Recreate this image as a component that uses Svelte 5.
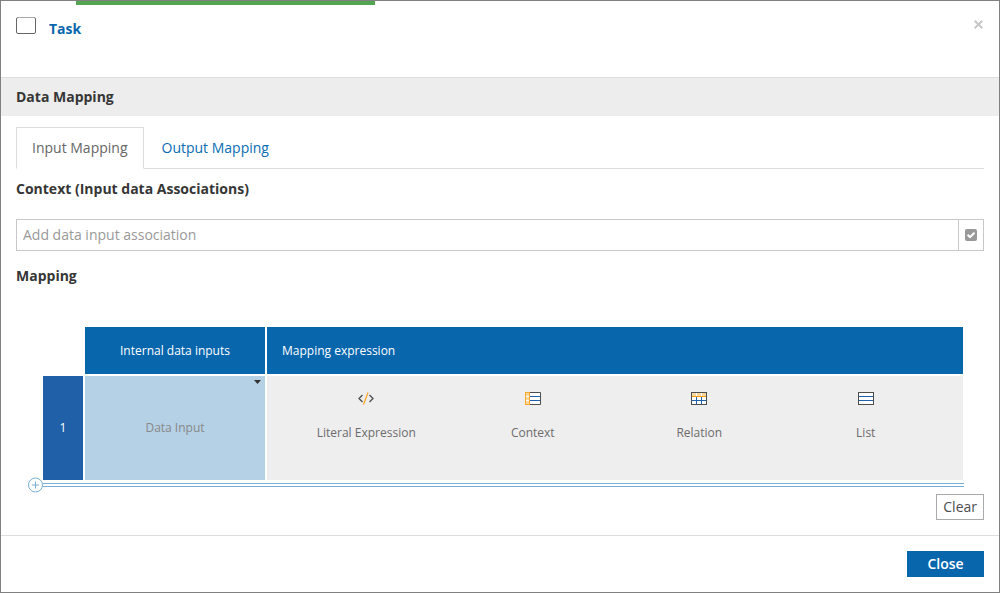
<script lang="ts">
	let activeTab = $state('input');
	let association = $state('');

	const tabs = [
		{ id: 'input', label: 'Input Mapping' },
		{ id: 'output', label: 'Output Mapping' }
	];

	const expressions = [
		{ icon: 'literal', label: 'Literal Expression' },
		{ icon: 'context', label: 'Context' },
		{ icon: 'relation', label: 'Relation' },
		{ icon: 'list', label: 'List' }
	];

	function selectTab(e: MouseEvent, id: string) {
		e.preventDefault();
		activeTab = id;
	}

	function clear() {
		association = '';
	}
</script>

<div class="dialog" role="dialog" aria-labelledby="dialog-title">
	<div class="progress"></div>

	<header>
		<svg class="task-icon" width="20" height="17" viewBox="0 0 20 17">
			<rect x="0.5" y="0.5" width="19" height="16" rx="1.5" fill="#fff" stroke="#666" />
			<path d="M1.5 0.5h17" stroke="#aaa" />
		</svg>
		<h1 id="dialog-title">Task</h1>
		<button class="dismiss" aria-label="Dismiss">
			<svg width="9" height="9" viewBox="0 0 9 9">
				<path d="M0.7 0.7l7.6 7.6M8.3 0.7l-7.6 7.6" stroke="#c8c8c8" stroke-width="2" />
			</svg>
		</button>
	</header>

	<h2 class="section-title">Data Mapping</h2>

	<div class="content">
		<nav>
			{#each tabs as tab}
				<a
					href="#{tab.id}"
					class:active={activeTab === tab.id}
					onclick={(e) => selectTab(e, tab.id)}>{tab.label}</a
				>
			{/each}
		</nav>

		<label class="heading" for="association">Context (Input data Associations)</label>
		<div class="input-group">
			<input
				id="association"
				type="text"
				placeholder="Add data input association"
				bind:value={association}
			/>
			<button aria-label="Pick association">
				<svg width="12" height="12" viewBox="0 0 12 12">
					<rect width="12" height="12" rx="2" fill="#999" />
					<path d="M2.6 5.8l2.4 2.4 4.5-4.5" fill="none" stroke="#fff" stroke-width="2" />
				</svg>
			</button>
		</div>

		<h3 class="heading">Mapping</h3>

		<div class="mapping">
			<table>
				<colgroup>
					<col class="col-number" />
					<col class="col-input" />
					<col />
				</colgroup>
				<thead>
					<tr>
						<td></td>
						<th>Internal data inputs</th>
						<th class="left">Mapping expression</th>
					</tr>
				</thead>
				<tbody>
					<tr>
						<th class="number">1</th>
						<td class="data-input">
							Data Input
							<svg class="caret" width="7" height="4" viewBox="0 0 7 4">
								<path d="M0 0h7L3.5 4z" fill="#333" />
							</svg>
						</td>
						<td class="expression">
							<div class="options">
								{#each expressions as { icon, label }}
									<button>
										<svg width="16" height="13" viewBox="0 0 16 13" fill="none">
											{#if icon === 'literal'}
												<path d="M4.5 3L1 6.5 4.5 10M11.5 3L15 6.5 11.5 10" stroke="#4d4d4d" stroke-width="1.3" />
												<path d="M10 0.5L5.5 12.5" stroke="#f9a72b" stroke-width="1.3" />
											{:else if icon === 'context'}
												<path d="M5 0.5h10.5v12H5" fill="#fff" stroke="#4d4d4d" />
												<path d="M5 4.5h10M5 8.5h10" stroke="#1f60a8" />
												<rect x="0.5" y="0.5" width="4" height="12" fill="#fbd7a0" stroke="#f9a72b" />
												<path d="M1 4.5h3M1 8.5h3" stroke="#fff" />
											{:else if icon === 'relation'}
												<rect x="0.5" y="0.5" width="15" height="12" fill="#fff" stroke="#4d4d4d" />
												<path d="M1 2.5h14" stroke="#fbd7a0" stroke-width="3" />
												<path d="M5.5 1v3M10.5 1v3" stroke="#fff" />
												<path d="M1 8.5h14M5.5 5v7M10.5 5v7" stroke="#1f60a8" />
												<path d="M1 4.5h14" stroke="#f99d12" />
											{:else}
												<rect x="0.5" y="0.5" width="15" height="12" fill="#fff" stroke="#4d4d4d" />
												<path d="M1 4.5h14M1 8.5h14" stroke="#1f60a8" />
											{/if}
										</svg>
										{label}
									</button>
								{/each}
							</div>
						</td>
					</tr>
				</tbody>
			</table>

			<div class="add-row">
				<button aria-label="Add row">
					<svg width="15" height="16" viewBox="0 0 15 16" fill="none" stroke="#78afd6">
						<circle cx="7.5" cy="8" r="7" />
						<path d="M7.5 4.5v7M4 8h7" />
					</svg>
				</button>
				<span class="line"></span>
			</div>
		</div>

		<button class="clear" onclick={clear}>Clear</button>
	</div>

	<footer>
		<button class="close">Close</button>
	</footer>
</div>

<style>
	:global(body) {
		background: #fff;
	}

	.dialog {
		position: relative;
		box-sizing: border-box;
		border: 1px solid #808080;
		background: #fff;
		color: #363636;
		font-family: 'Open Sans', sans-serif;
		font-size: 14px;
		line-height: 20px;
	}

	button,
	input {
		box-sizing: border-box;
		margin: 0;
		padding: 0;
		border: none;
		border-radius: 0;
		background: none;
		color: inherit;
		font: inherit;
	}

	button {
		cursor: pointer;
	}

	svg {
		display: block;
	}

	h1,
	h2,
	h3 {
		margin: 0;
		font-size: 14px;
		font-weight: 700;
	}

	/* sits over the top border of the dialog */
	.progress {
		position: absolute;
		top: -1px;
		left: 75px;
		width: 30%;
		height: 5px;
		border-top: 1px solid #808080;
		box-sizing: border-box;
		background: #53a551;
	}

	header {
		display: flex;
		align-items: flex-start;
		gap: 13px;
		height: 60px;
		padding: 16px 16px 0 15px;
	}

	h1 {
		flex: 1;
		padding-top: 2px;
		color: #0a67ad;
	}

	.dismiss {
		padding-top: 3px;
	}

	.section-title {
		padding: 9px 15px;
		border-top: 1px solid #ddd;
		background: #ededed;
	}

	.content {
		padding: 11px 15px 15px;
	}

	nav {
		display: flex;
		border-bottom: 1px solid #ddd;
	}

	nav a {
		margin-bottom: -1px;
		padding: 10px 15px;
		border: 1px solid transparent;
		color: #0a6cb4;
		text-decoration: none;
	}

	nav a + a {
		margin-left: 2px;
	}

	nav a.active {
		border-color: #ddd;
		border-bottom-color: #fff;
		color: #666;
	}

	.heading {
		display: block;
		padding-top: 10px;
		font-weight: 700;
	}

	.input-group {
		display: flex;
		height: 32px;
		margin: 20px 0 5px;
		box-sizing: border-box;
		border: 1px solid #c8c8c8;
	}

	.input-group input {
		flex: 1;
		padding: 0 6px;
	}

	.input-group input::placeholder {
		color: #999;
		opacity: 1;
	}

	.input-group button {
		width: 25px;
		padding-left: 6px;
		border-left: 1px solid #c8c8c8;
	}

	.mapping {
		margin: 39px 20px 0 12px;
		font-size: 12px;
	}

	table {
		box-sizing: border-box;
		width: calc(100% - 12px);
		margin-left: 13px;
		border-spacing: 2px;
		table-layout: fixed;
	}

	.col-number {
		width: 40px;
	}

	.col-input {
		width: 180px;
	}

	td,
	th {
		padding: 0;
		text-align: center;
	}

	thead th {
		height: 47px;
		background: #0866ad;
		color: #fff;
		font-weight: 400;
	}

	thead th.left {
		padding-left: 15px;
		text-align: left;
	}

	.number {
		height: 104px;
		background: #1f60a9;
		color: #fff;
		font-weight: 400;
	}

	.data-input {
		position: relative;
		background: #b5d1e5;
		color: #888;
	}

	.caret {
		position: absolute;
		top: 4px;
		right: 4px;
	}

	.expression {
		padding: 0 14px 0 16px;
		background: #eee;
		vertical-align: top;
	}

	.options {
		display: grid;
		grid-template-columns: repeat(4, 1fr);
		padding-top: 16px;
		color: #6c6c6c;
	}

	.options button {
		display: flex;
		flex-direction: column;
		align-items: center;
		gap: 18px;
	}

	.add-row {
		display: flex;
		align-items: center;
		margin-top: -5px;
	}

	.line {
		flex: 1;
		box-sizing: border-box;
		height: 4px;
		border: solid #78afd6;
		border-width: 1px 0;
	}

	.clear {
		display: block;
		height: 26px;
		margin: 1px 0 0 auto;
		padding: 0 6px;
		border: 1px solid #aaa;
		color: #4d4d4d;
	}

	footer {
		display: flex;
		justify-content: flex-end;
		padding: 15px;
		border-top: 1px solid #ddd;
	}

	.close {
		height: 26px;
		min-width: 77px;
		padding: 0 20px;
		background: #0866ad;
		color: #fff;
		font-weight: 600;
	}
</style>
